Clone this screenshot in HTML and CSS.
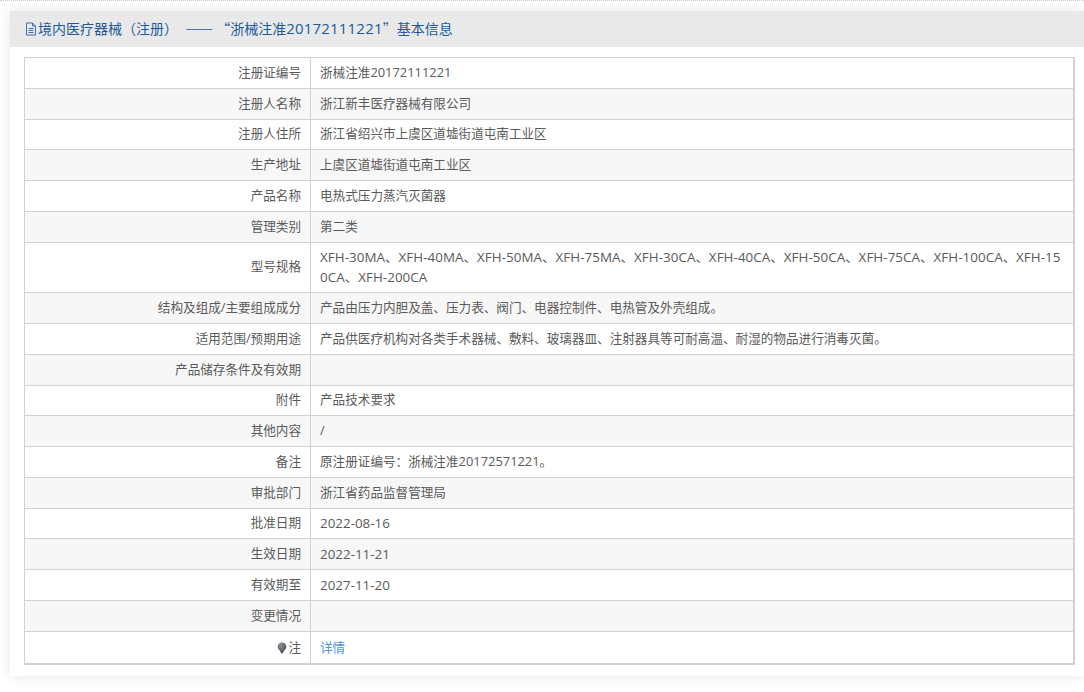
FILE: index.html
```html
<!DOCTYPE html>
<html lang="zh-CN">
<head>
<meta charset="utf-8">
<title>基本信息</title>
<link rel="stylesheet" href="styles.css">
</head>
<body>
<div class="page">
  <section class="panel">
    <h1 class="panel-title">
      <svg class="doc-icon" viewBox="0 0 12 14" width="12" height="14" aria-hidden="true"><path d="M1.500 1h6l3 3v9h-9z M7.500 1v3h3 M3.500 6.500h5 M3.500 8.500h5 M3.500 10.500h5" fill="none" stroke="currentColor" stroke-width="1"/></svg><span class="cjk">境内医疗器械（注册） <span class="dash">——</span>“浙械注准</span><span class="head-num">20172111221</span><span class="cjk">”基本信息</span>
    </h1>
    <div class="panel-body">
      <table class="info">
        <tbody>
          <tr><th>注册证编号</th><td>浙械注准<span class="num">20172111221</span></td></tr>
          <tr><th>注册人名称</th><td>浙江新丰医疗器械有限公司</td></tr>
          <tr><th>注册人住所</th><td>浙江省绍兴市上虞区道墟街道屯南工业区</td></tr>
          <tr><th>生产地址</th><td>上虞区道墟街道屯南工业区</td></tr>
          <tr><th>产品名称</th><td>电热式压力蒸汽灭菌器</td></tr>
          <tr><th>管理类别</th><td>第二类</td></tr>
          <tr><th>型号规格</th><td class="models">XFH-30MA、XFH-40MA、XFH-50MA、XFH-75MA、XFH-30CA、XFH-40CA、XFH-50CA、XFH-75CA、XFH-100CA、XFH-150CA、XFH-200CA</td></tr>
          <tr><th>结构及组成/主要组成成分</th><td>产品由压力内胆及盖、压力表、阀门、电器控制件、电热管及外壳组成。</td></tr>
          <tr><th>适用范围/预期用途</th><td>产品供医疗机构对各类手术器械、敷料、玻璃器皿、注射器具等可耐高温、耐湿的物品进行消毒灭菌。</td></tr>
          <tr><th>产品储存条件及有效期</th><td></td></tr>
          <tr><th>附件</th><td>产品技术要求</td></tr>
          <tr><th>其他内容</th><td>/</td></tr>
          <tr><th>备注</th><td>原注册证编号：浙械注准<span class="num">20172571221</span>。</td></tr>
          <tr><th>审批部门</th><td>浙江省药品监督管理局</td></tr>
          <tr><th>批准日期</th><td class="date">2022-08-16</td></tr>
          <tr><th>生效日期</th><td class="date">2022-11-21</td></tr>
          <tr><th>有效期至</th><td class="date">2027-11-20</td></tr>
          <tr><th>变更情况</th><td></td></tr>
          <tr class="last"><th><svg class="pin" viewBox="0 0 10 12" width="10" height="12" aria-hidden="true"><defs><radialGradient id="pinShade" cx="0.35" cy="0.25" r="0.8"><stop offset="0" stop-color="#8a8f96"/><stop offset="1" stop-color="#4a4d52"/></radialGradient></defs><path d="M5 0.500a4.300 4.300 0 0 1 2.500 7.800L5.700 11.500h-1.400L2.500 8.300A4.300 4.300 0 0 1 5 0.500z" fill="url(#pinShade)"/></svg>注</th><td><a class="link" href="#">详情</a></td></tr>
        </tbody>
      </table>
    </div>
  </section>
</div>
</body>
</html>
```
FILE: styles.css
```css
html, body {
  margin: 0;
  padding: 0;
  background: #fff;
}
body {
  font-family: "Open Sans", "Noto Sans CJK SC", sans-serif;
  font-size: 12.6px;
  color: #5a5a5a;
  overflow: hidden;
  height: 692px;
}
.page {
  border-top: 1px dotted #ccc;
  padding: 10px 0 0 10px;
}
.panel {
  background: #fff;
  box-shadow: 0 0 12px rgba(0, 0, 0, 0.1);
  height: 665px;
}
.panel-title {
  margin: 0;
  height: 36px;
  line-height: 34px;
  padding-left: 15px;
  background: #e9e9e9;
  color: #1c5a9c;
  font-size: 14px;
  font-weight: 400;
  white-space: nowrap;
}
.cjk {
  font-family: "Noto Sans CJK SC", sans-serif;
  word-spacing: 4px;
}
.dash {
  letter-spacing: 3px;
  font-weight: 500;
}
.head-num {
  font-size: 15px;
  line-height: 1;
  letter-spacing: 0.200px;
}
.doc-icon {
  vertical-align: -2px;
  margin-right: 1px;
  color: #3f6fa8;
}
.panel-body {
  padding: 10px 9px 0 14px;
}
.info {
  width: 1051px;
  border-collapse: collapse;
  table-layout: fixed;
  border: 2px solid #d2d2d2;
  border-width: 1px 2px 2px 1px;
}
.info th,
.info td {
  border: 1px solid #d2d2d2;
  padding: 4.880px 9px;
  line-height: 20px;
  font-weight: 400;
  word-break: break-all;
  height: 20px;
}
.info th {
  width: 267px;
  text-align: right;
}
.info tr:nth-child(even) th,
.info tr:nth-child(even) td {
  background: #f7f7f7;
}
.num {
  font-size: 12.900px;
  line-height: 1;
}
.info .date {
  font-size: 13.400px;
}
.info .models {
  font-size: 13.400px;
  letter-spacing: 0.050px;
}
.last th,
.last td {
  padding-top: 6px;
  padding-bottom: 5.500px;
}
.pin {
  vertical-align: -2px;
  margin-right: 1px;
}
.link {
  color: #4f94e0;
  text-decoration: none;
}
```
